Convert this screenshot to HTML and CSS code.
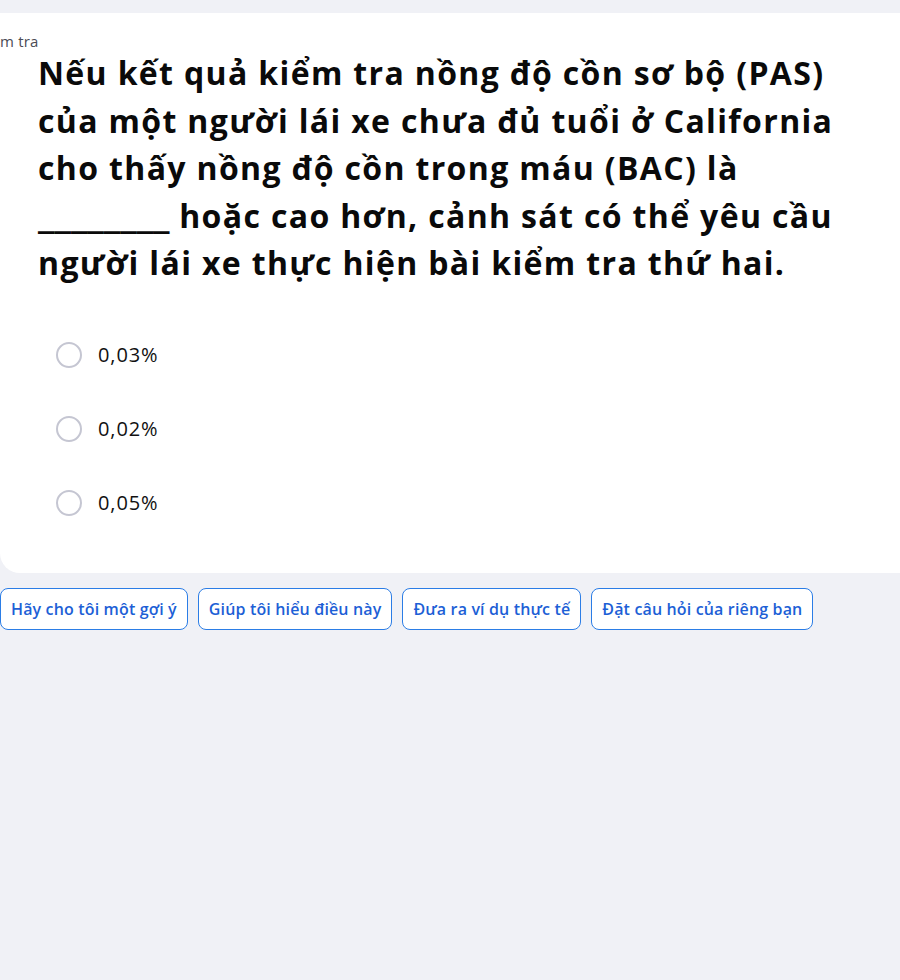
FILE: index.html
```html
<!DOCTYPE html>
<html lang="vi">
<head>
<meta charset="utf-8">
<link rel="stylesheet" href="styles.css">
</head>
<body>
<div class="page">
  <section class="card">
    <div class="label">m tra</div>
    <h1 class="question">Nếu kết quả kiểm tra nồng độ cồn sơ bộ (PAS) của một người lái xe chưa đủ tuổi ở California cho thấy nồng độ cồn trong máu (BAC) là <span class="blank">________</span> hoặc cao hơn, cảnh sát có thể yêu cầu người lái xe thực hiện bài kiểm tra thứ hai.</h1>
    <ul class="options">
      <li class="option"><span class="radio"></span><span class="opt-text">0,03%</span></li>
      <li class="option"><span class="radio"></span><span class="opt-text">0,02%</span></li>
      <li class="option"><span class="radio"></span><span class="opt-text">0,05%</span></li>
    </ul>
  </section>
  <div class="chips">
    <button class="chip">Hãy cho tôi một gợi ý</button>
    <button class="chip">Giúp tôi hiểu điều này</button>
    <button class="chip">Đưa ra ví dụ thực tế</button>
    <button class="chip">Đặt câu hỏi của riêng bạn</button>
  </div>
</div>
</body>
</html>
```
FILE: styles.css
```css
html, body {
  margin: 0;
  padding: 0;
  background: #f0f1f6;
  font-family: "Open Sans", "Noto Sans", sans-serif;
  overflow: hidden;
}
.page {
  padding-top: 13px;
  width: 900px;
  height: 980px;
  box-sizing: border-box;
}
.card {
  background: #ffffff;
  width: 920px;
  border-radius: 0 20px 20px 20px;
  padding: 20px 0 0 0;
  box-sizing: border-box;
  height: 560px;
}
.label {
  font-size: 15px;
  color: #4b4b55;
  line-height: 16px;
  letter-spacing: 0.2px;
}
.question {
  margin: 0 0 0 38px;
  font-size: 32px;
  line-height: 47.5px;
  font-weight: 700;
  letter-spacing: 1.35px;
  color: #0a0a0a;
  width: 820px;
}
.blank {
  font-size: 40px;
  line-height: 20px;
  letter-spacing: 0;
}
.options {
  list-style: none;
  margin: 55px 0 0 0;
  padding: 0 0 0 56px;
}
.option {
  display: flex;
  align-items: center;
  gap: 16px;
  height: 26px;
  margin-bottom: 48px;
}
.radio {
  width: 22px;
  height: 22px;
  border: 2px solid #c5c6d2;
  border-radius: 50%;
  flex: none;
}
.opt-text {
  font-size: 20px;
  letter-spacing: 0.9px;
  color: #111;
}
.chips {
  display: flex;
  gap: 10px;
  margin-top: 15px;
}
.chip {
  font-family: inherit;
  font-size: 16px;
  font-weight: 600;
  letter-spacing: 0.15px;
  color: #1d5fd6;
  background: #fff;
  border: 1px solid #2b7de6;
  border-radius: 8px;
  height: 42px;
  padding: 0 10px;
}
```
